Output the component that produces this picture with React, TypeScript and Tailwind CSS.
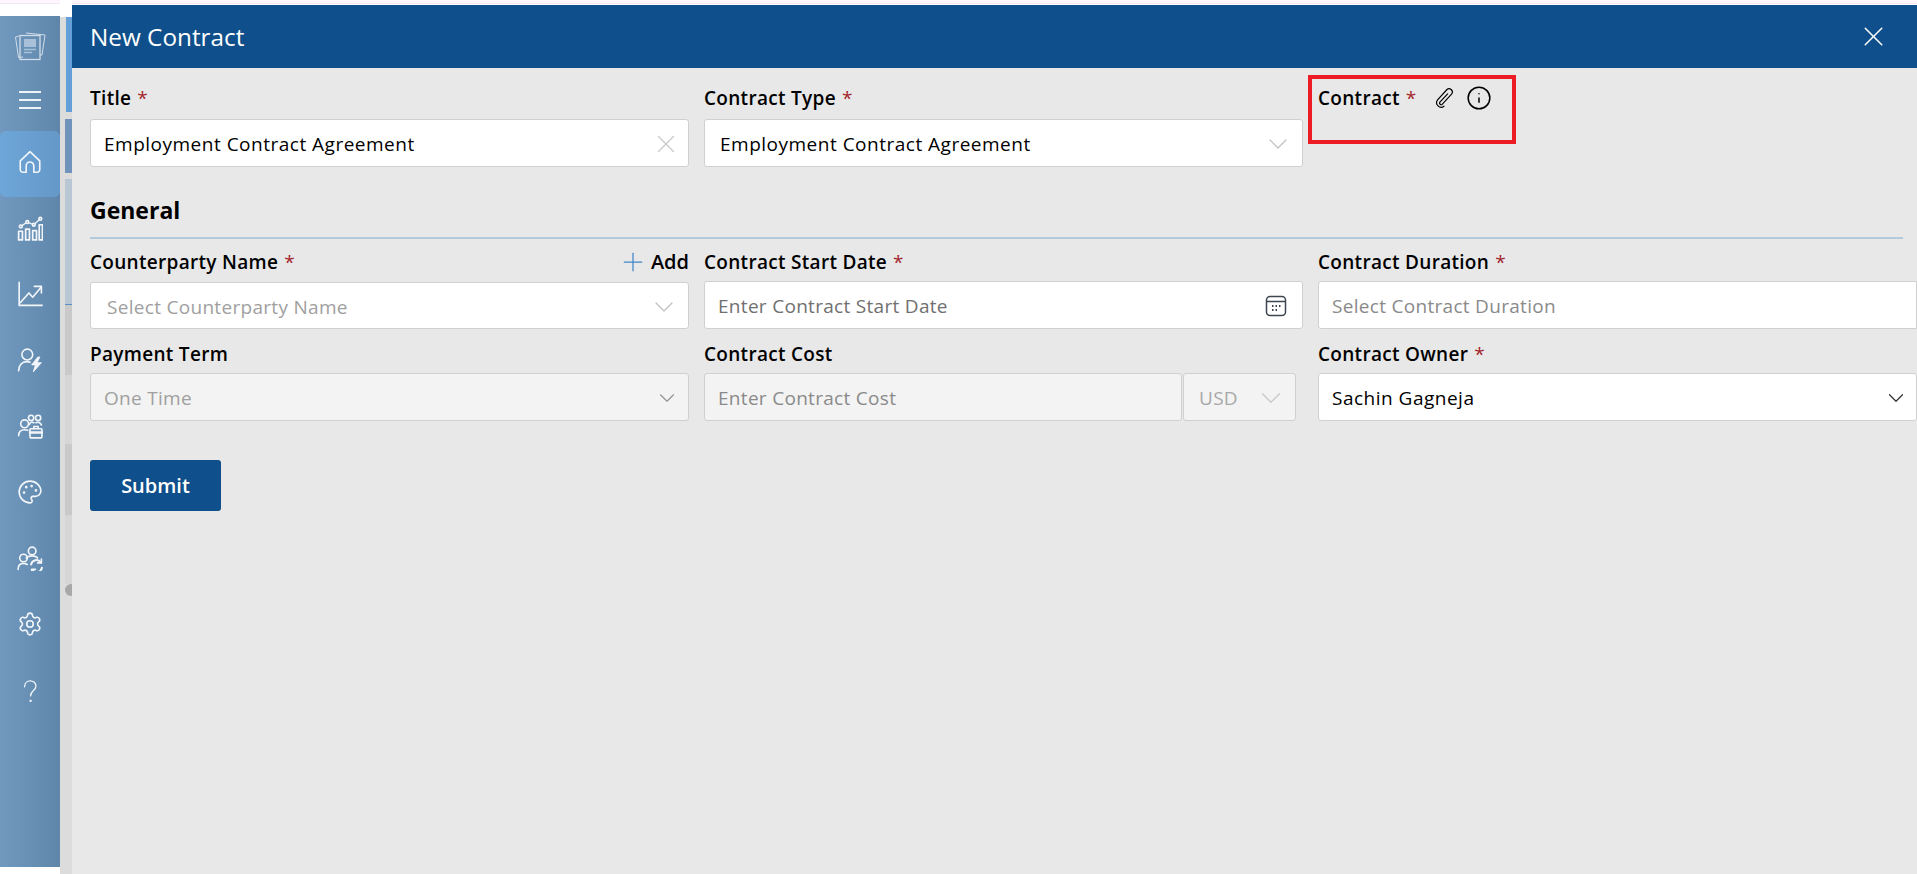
import { Palette, Settings, X, ChevronDown, Plus, Info } from 'lucide-react';
import type { ReactNode } from 'react';

const valueText = 'text-[19px] tracking-[0.5px] text-black';
const hintText = 'text-[19px] tracking-[0.3px]';

function Icon({ children, className }: { children: ReactNode; className?: string }) {
    return (
        <svg viewBox="0 0 24 24" fill="none" stroke="currentColor" strokeWidth="1.5" strokeLinecap="round" strokeLinejoin="round" className={className ?? 'w-[26px] h-[26px]'}>
            {children}
        </svg>
    );
}

function NavItem({ children, active }: { children: ReactNode; active?: boolean }) {
    return (
        <div className={`h-[66px] pb-1 flex items-center justify-center ${active ? 'bg-gradient-to-r from-[#6ea6d9] to-[#6498c8] rounded-md' : ''}`}>
            {children}
        </div>
    );
}

function Sidebar() {
    return (
        <div className="w-[60px] mt-[16px] h-[851px] shrink-0 flex flex-col text-[#f2f6fa] bg-gradient-to-r from-[#7199bf] to-[#5f86aa]">
            <div className="h-[60px] flex items-center justify-center">
                <svg viewBox="0 0 32 32" className="w-[32px] h-[32px]" fill="none" stroke="#cfdde9" strokeWidth="1">
                    <path d="M5 6 L1.5 7 L4.5 27.5 L9 27" />
                    <path d="M12 3 L31 5 L28 25 L26 25" />
                    <rect x="6" y="5.5" width="20" height="24" strokeWidth="1.3" />
                    <rect x="10" y="9" width="12" height="8" fill="#a9c1d8" stroke="none" />
                    <path d="M10 19.5 H22 M10 22.5 H18" stroke="#a9c1d8" strokeWidth="1.5" />
                </svg>
            </div>
            <div className="h-[48px] flex flex-col items-center justify-center gap-[6.5px]">
                <div className="w-[22px] h-[1.5px] bg-[#eef3f8]" />
                <div className="w-[22px] h-[1.5px] bg-[#eef3f8]" />
                <div className="w-[22px] h-[1.5px] bg-[#eef3f8]" />
            </div>
            <div className="mt-[7px] flex flex-col">
                <NavItem active>
                    <Icon>
                        <path d="M3 11 L12 2.5 L21 11 V19 A2.5 2.5 0 0 1 18.5 21.5 H15.5 V15.5 A3.5 3.5 0 0 0 8.5 15.5 V21.5 H5.5 A2.5 2.5 0 0 1 3 19 Z" />
                    </Icon>
                </NavItem>
                <NavItem>
                    <Icon>
                        <path d="M1.5 15 H5 V23 H1.5 Z M8 13 H11.5 V23 H8 Z M14.5 14.5 H18 V23 H14.5 Z M20.5 9 H23.5 V23 H20.5 Z" strokeWidth="1.6" />
                        <path d="M3.5 10.5 L9.5 6.5 L15.5 9 L21.5 3.5" strokeWidth="1.2" />
                        <circle cx="3.5" cy="10.5" r="1.3" fill="#6f96bb" />
                        <circle cx="9.5" cy="6.5" r="1.3" fill="#6f96bb" />
                        <circle cx="15.5" cy="9" r="1.3" fill="#6f96bb" />
                        <circle cx="21.5" cy="3.5" r="1.3" fill="#6f96bb" />
                    </Icon>
                </NavItem>
                <NavItem>
                    <Icon>
                        <path d="M2 1.5 V22.5 H23" strokeLinecap="square" />
                        <path d="M3 20 L11 11 L14.5 15 L22 6" />
                        <path d="M16 5 H22.5 V11" />
                    </Icon>
                </NavItem>
                <NavItem>
                    <Icon>
                        <circle cx="9.5" cy="7" r="5" />
                        <path d="M1.5 22 C1.5 17 4.5 13.5 9 13.5 C10 13.5 11 13.7 12 14" />
                        <path d="M19 9.5 L13.5 16.5 H17 L15 23 L22.5 14.5 H18.5 L21 9.5 Z" fill="currentColor" strokeWidth="0.8" />
                    </Icon>
                </NavItem>
                <NavItem>
                    <Icon>
                        <circle cx="7" cy="10" r="3.6" />
                        <path d="M1.5 21 C1.5 17 3.5 15.5 7 15.5 C8 15.5 9 15.7 10 16" />
                        <circle cx="13" cy="4.5" r="2.4" />
                        <circle cx="19.5" cy="4.5" r="2.4" />
                        <path d="M11.5 10.5 C12 8.5 14 8 15.5 9 M17.5 9 C19 8 21.5 8.5 22.5 11" />
                        <rect x="12" y="14.5" width="11" height="8.5" rx="0.8" />
                        <path d="M15.5 14.5 V12.5 H19.5 V14.5" />
                        <path d="M12 18 H23" strokeWidth="2.2" />
                    </Icon>
                </NavItem>
                <NavItem>
                    <Palette className="w-[26px] h-[26px]" strokeWidth={1.5} />
                </NavItem>
                <NavItem>
                    <Icon>
                        <circle cx="14" cy="5.5" r="3.5" />
                        <circle cx="6" cy="12" r="3.5" />
                        <path d="M1 22.5 C1 19 3 17 6 17 C7.5 17 8.5 17.5 9.5 18" />
                        <path d="M8.5 12 C9.5 10.5 11.5 10 14 10 C16 10 18 10.5 19 12" />
                        <path d="M13 18 A5 5 0 0 1 22 16 M23 21 A5 5 0 0 1 14 23" strokeWidth="1.8" />
                        <path d="M22.5 13 V16.5 H19 M13.5 26 V22.5 H17" strokeWidth="1.5" />
                    </Icon>
                </NavItem>
                <NavItem>
                    <Settings className="w-[26px] h-[26px]" strokeWidth={1.5} />
                </NavItem>
                <NavItem>
                    <Icon>
                        <path d="M7 9 C7 5.5 9.5 3.5 12.2 3.5 C15 3.5 17.5 5.5 17.5 8.5 C17.5 12.5 12.5 12.5 12.5 17.5" strokeWidth="1.2" />
                        <circle cx="12.5" cy="22" r="0.8" fill="currentColor" strokeWidth="0.6" />
                    </Icon>
                </NavItem>
            </div>
        </div>
    );
}

// the page that shows behind the dialog, only a thin strip of it is visible
function BackgroundStrip() {
    return (
        <div className="w-[12px] shrink-0 pl-[5px] bg-[#dcdcdc] flex flex-col">
            <div className="h-[17px] -ml-[5px] bg-white" />
            <div className="h-[95px] ml-[1px] bg-[#63a0d9]" />
            <div className="h-[7px]" />
            <div className="h-[54px] bg-[#6f93ba]" />
            <div className="h-[6px]" />
            <div className="h-[125px] bg-[#b9c6d3]" />
            <div className="h-[1px] bg-[#5b8fc4]" />
            <div className="h-[70px] bg-[#c9c9c9]" />
            <div className="h-[69px] bg-[#d6d6d6]" />
            <div className="h-[71px] bg-[#c9c9c9]" />
            <div className="h-[69px] bg-[#d6d6d6]" />
            <div className="w-[12px] h-[12px] rounded-full bg-[#a8a8a8]" />
        </div>
    );
}

function Label({ text, required }: { text: string; required?: boolean }) {
    return (
        <span className="text-[19px] font-semibold tracking-[0.3px] text-black whitespace-nowrap">
            {text}
            {required && <span className="text-[#a4262c] font-normal ml-[6px]">*</span>}
        </span>
    );
}

function Box({ children, disabled, className }: { children: ReactNode; disabled?: boolean; className?: string }) {
    return (
        <div className={`pt-[2px] border border-[#d0d0d0] rounded-[3px] flex items-center justify-between ${disabled ? 'bg-[#f3f3f3]' : 'bg-white'} ${className ?? 'h-[48px]'}`}>
            {children}
        </div>
    );
}

function Field({ label, required, right, children }: { label: string; required?: boolean; right?: ReactNode; children: ReactNode }) {
    return (
        <div className="flex flex-col gap-[5px]">
            <div className="h-[28px] flex items-center justify-between">
                <Label text={label} required={required} />
                {right}
            </div>
            {children}
        </div>
    );
}

function Dialog() {
    return (
        <div className="absolute left-[72px] top-[5px] right-0 bottom-0 bg-[#e8e8e8] flex flex-col font-['Open_Sans',sans-serif]">
            <div className="h-[63px] shrink-0 bg-[#0f4f8b] flex items-center justify-between pl-[18px] pr-[27px]">
                <span className="mt-[1px] text-[24.3px] text-white">New Contract</span>
                <X className="w-[33px] h-[33px] text-white" strokeWidth={1.1} />
            </div>

            <div className="pl-[18px] pt-[16px] flex flex-col">
                <div className="grid grid-cols-3 gap-x-[15px]">
                    <div className="flex flex-col gap-[7px]">
                        <div className="h-[28px] flex items-center"><Label text="Title" required /></div>
                        <Box className="h-[48px] pl-[13px] pr-[7px]">
                            <span className={valueText}>Employment Contract Agreement</span>
                            <X className="w-[30px] h-[30px] text-[#c8c8c8]" strokeWidth={1} />
                        </Box>
                    </div>
                    <div className="flex flex-col gap-[7px]">
                        <div className="h-[28px] flex items-center"><Label text="Contract Type" required /></div>
                        <Box className="h-[48px] pl-[15px] pr-[8px]">
                            <span className={valueText}>Employment Contract Agreement</span>
                            <ChevronDown className="w-[32px] h-[32px] text-[#c0c0c0]" strokeWidth={0.9} />
                        </Box>
                    </div>
                    <div className="h-[28px] flex items-center">
                        <Label text="Contract" required />
                        <svg viewBox="0 0 24 24" className="ml-[16px] w-[22px] h-[22px]" fill="none" stroke="black" strokeWidth="1.3" strokeLinecap="round">
                            <path d="M16 7.5 L7.5 16.5 A1.8 1.8 0 0 0 10 19 L20 8 A3.5 3.5 0 0 0 15 3 L5 14 A5 5 0 0 0 12 21" />
                        </svg>
                        <Info className="ml-[11px] w-[26px] h-[26px] text-black" strokeWidth={1.4} />
                    </div>
                </div>

                <div className="mt-[23px] h-[40px] flex items-center">
                    <h2 className="text-[23px] font-bold text-black">General</h2>
                </div>
                <div className="mt-[7px] mr-[14px] h-[2px] bg-[#b3c9dc]" />

                <div className="mt-[9px] grid grid-cols-3 gap-x-[15px] gap-y-[11px]">
                    <Field
                        label="Counterparty Name"
                        required
                        right={
                            <span className="flex items-center gap-[3px] text-[20px] font-semibold text-black">
                                <Plus className="w-[30px] h-[30px] text-[#3f86c9]" strokeWidth={1} />
                                Add
                            </span>
                        }
                    >
                        <Box className="mt-[1px] h-[47px] pl-[16px] pr-[8px]">
                            <span className={`mt-[2px] ${hintText} text-[#a0a0a0]`}>Select Counterparty Name</span>
                            <ChevronDown className="w-[32px] h-[32px] text-[#c0c0c0]" strokeWidth={0.9} />
                        </Box>
                    </Field>
                    <Field label="Contract Start Date" required>
                        <Box className="h-[48px] pl-[13px] pr-[14px]">
                            <span className={`${hintText} text-[#707070]`}>Enter Contract Start Date</span>
                            <svg viewBox="0 0 24 24" className="w-[24px] h-[24px]" fill="none" stroke="#3d4650" strokeWidth="1.5">
                                <rect x="2.5" y="2.5" width="19" height="19" rx="3.5" />
                                <path d="M2.5 7.5 H21.5" />
                                <path d="M8 12 H9.5 M11.5 12 H13 M15 12 H16.5 M8 16 H9.5 M11.5 16 H13" strokeWidth="2" />
                            </svg>
                        </Box>
                    </Field>
                    <Field label="Contract Duration" required>
                        <Box className="h-[48px] pl-[13px] pr-[14px] rounded-r-none">
                            <span className={`${hintText} text-[#8a8a8a]`}>Select Contract Duration</span>
                        </Box>
                    </Field>
                    <Field label="Payment Term">
                        <Box disabled className="h-[48px] pl-[13px] pr-[8px]">
                            <span className={`${hintText} text-[#a0a0a0]`}>One Time</span>
                            <ChevronDown className="w-[26px] h-[26px] text-[#909090]" strokeWidth={1} />
                        </Box>
                    </Field>
                    <Field label="Contract Cost">
                        <div className="flex gap-[1px] mr-[7px]">
                            <Box disabled className="h-[48px] flex-1 pl-[13px]">
                                <span className={`${hintText} text-[#8a8a8a]`}>Enter Contract Cost</span>
                            </Box>
                            <Box disabled className="h-[48px] w-[113px] pl-[15px] pr-[7px]">
                                <span className={`${hintText} text-[#a8a8a8]`}>USD</span>
                                <ChevronDown className="w-[34px] h-[34px] text-[#c8c8c8]" strokeWidth={0.9} />
                            </Box>
                        </div>
                    </Field>
                    <Field label="Contract Owner" required>
                        <Box className="h-[48px] pl-[13px] pr-[7px]">
                            <span className={valueText}>Sachin Gagneja</span>
                            <ChevronDown className="w-[26px] h-[26px] text-[#303030]" strokeWidth={1.1} />
                        </Box>
                    </Field>
                </div>

                <button className="mt-[39px] w-[131px] h-[51px] rounded-[3px] bg-[#0f4f8b] text-white text-[20px] font-semibold">
                    Submit
                </button>
            </div>

            {/* red annotation box round the Contract label */}
            <div className="absolute left-[1236px] top-[70px] w-[208px] h-[69px] border-[4px] border-[#ed1c24]" />
        </div>
    );
}

export default function App() {
    return (
        <div className="relative h-[874px] overflow-hidden bg-white">
            <div className="h-[4px] border-b border-[#f6e6f6] bg-[#fdf7fd]" />
            <div className="flex -mt-[4px] h-[874px]">
                <Sidebar />
                <BackgroundStrip />
            </div>
            <Dialog />
        </div>
    );
}
